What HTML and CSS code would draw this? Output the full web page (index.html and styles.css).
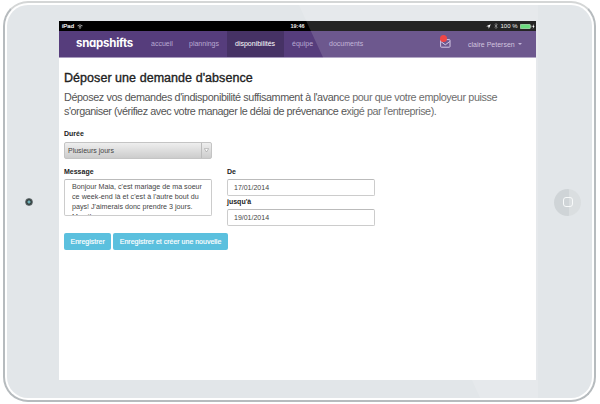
FILE: index.html
```html
<!DOCTYPE html>
<html lang="fr">
<head>
<meta charset="utf-8">
<title>snapshifts</title>
<link rel="stylesheet" href="styles.css">
</head>
<body>
<div class="tablet">
  <div class="bezel">
    <div class="side left"><span class="camera"></span></div>
    <main class="screen">
      <div class="status">
        <span class="device"><b>iPad</b>
          <svg width="6" height="5" viewBox="0 0 6 5"><path d="M.5 1.800Q3 0 5.500 1.800M1.600 3Q3 2 4.400 3" fill="none" stroke="#ccc" stroke-width=".8"/><circle cx="3" cy="4" r=".7" fill="#ccc"/></svg></span>
        <span class="clock">19:46</span>
        <span class="power">
          <svg width="5" height="5" viewBox="0 0 5 5"><path d="M4.800 .2 2.800 4.800 2.400 2.600 .2 2.200z" fill="#fff"/></svg>
          <svg width="4" height="6" viewBox="0 0 4 6"><path d="M.5 1.700 3.300 4.200 2 5.500V.5l1.300 1.300L.5 4.300" fill="none" stroke="#999" stroke-width=".6"/></svg>
          <span class="percent">100 %</span>
          <svg width="15" height="5" viewBox="0 0 15 5"><rect x=".3" y=".3" width="10" height="4.400" rx=".8" fill="#52d769" stroke="#c9e8cd" stroke-width=".6"/><path d="M11 1.600v1.800" stroke="#ccc" stroke-width=".8"/><path d="M13.800 0 12.200 2.800h1L12.700 5l1.900-2.900h-1z" fill="#fff"/></svg>
        </span>
      </div>
      <nav class="navbar">
        <span class="logo">snapshifts</span>
        <a class="n1">accueil</a>
        <a class="n2">plannings</a>
        <a class="n3 active">disponibilités</a>
        <a class="n4">équipe</a>
        <a class="n5">documents</a>
        <span class="mail"><svg width="11" height="9" viewBox="0 0 11 9"><rect x=".6" y=".6" width="9.400" height="7.600" rx=".7" fill="none" stroke="#cdbfe0"/><path d="M.8 2.500 5.300 5.800 9.800 2.500" fill="none" stroke="#cdbfe0"/></svg><i class="dot"></i></span>
        <span class="user">claire Petersen<i class="caret"></i></span>
      </nav>
      <section class="content">
        <h1>Déposer une demande d'absence</h1>
        <p class="lead"><span class="l1">Déposez vos demandes d'indisponibilité suffisamment à l'avance pour que votre employeur puisse</span><br><span class="l2">s'organiser (vérifiez avec votre manager le délai de prévenance exigé par l'entreprise).</span></p>
        <label>Durée</label>
        <div class="select"><span>Plusieurs jours</span><span class="arrow"><svg width="5" height="5" viewBox="0 0 5 5"><path d="M.4 .6H4.600L2.500 4z" fill="#fff" stroke="#999" stroke-width=".6"/></svg></span></div>
        <div class="fields">
          <div>
            <label>Message</label>
            <div class="textarea">Bonjour Maia, c'est mariage de ma soeur<br><span class="wide">ce week-end là et c'est à l'autre bout du</span><br>pays! J'aimerais donc prendre 3 jours.<br>Merci!</div>
          </div>
          <div>
            <label>De</label>
            <div class="input">17/01/2014</div>
            <label class="until">jusqu'à</label>
            <div class="input">19/01/2014</div>
          </div>
        </div>
        <div class="actions"><span class="btn">Enregistrer</span><span class="btn">Enregistrer et créer une nouvelle</span></div>
      </section>
    </main>
    <div class="side right"><span class="home"><i></i></span></div>
  </div>
  <div class="gloss"></div>
</div>
</body>
</html>
```
FILE: styles.css
```css
*{box-sizing:border-box}
body{margin:0;background:#fff;font-family:"Liberation Sans",Arial,sans-serif;font-size:7px;color:#222}
.tablet{position:relative;width:593px;height:401px;margin:1px 0 0 3px;border:2px solid #b6bbbe;border-top-color:#d4d6d6;border-radius:25px;padding:2px;background:#fff;overflow:hidden}
.bezel{height:100%;border-radius:21px;background:#e2e6e9;display:grid;grid-template-columns:52px 477px 1fr;padding-top:16px}
.side{height:362px;display:flex;align-items:center}
.camera{width:8px;height:8px;margin-left:18px;border-radius:50%;background:radial-gradient(#6fb0b8 0 1px,#34403f 2px);border:1px solid #626b6e}
.home{width:27px;height:27px;margin-left:18px;border-radius:50%;background:linear-gradient(90deg,#cfd4d7 54%,#dadee0 54%);display:flex;align-items:center;justify-content:center}
.home i{width:10px;height:10px;border:1px solid #f8fafa;border-radius:3px}
.screen{height:359px;background:#fff;overflow:hidden}
.status{height:10px;background:#000;color:#eee;font-size:6px;display:grid;grid-template-columns:1fr auto 1fr;align-items:center;line-height:10px}
.device{padding-left:3px;display:flex;align-items:center;gap:3px}
.device b{font-weight:400;-webkit-text-stroke:.2px #eee}
.clock{font-weight:700;font-size:5.500px}
.power{display:flex;justify-content:flex-end;align-items:center;gap:2.500px;padding-right:1px}
.navbar{height:27px;border-bottom:1px solid #a79abd;background:#563d7c;color:#b9a9d2;display:flex;line-height:26px;white-space:nowrap}
.logo{color:#fff;font:700 11.500px/24px Inter,sans-serif;font-feature-settings:"cv11";letter-spacing:-.25px;width:83px;padding-left:17px}
.n1{width:37px;padding-left:9px}
.n2{width:48px;padding-left:10px}
.n3{width:57px;padding-left:8px}
.n4{width:37px;padding-left:8px}
.n5{width:60px;padding-left:8px}
.active{background:#463265;color:#fff}
.mail{position:relative;width:67px;padding:8px 0 0 59px;line-height:0}
.dot{position:absolute;left:59px;top:4px;width:7px;height:7px;border-radius:50%;background:#ee2828}
.user{padding-left:20px;line-height:27px;display:flex;align-items:center;gap:3px;color:#c9bcda}
.caret{border:2px solid transparent;border-top-color:#b9a9d2;border-bottom:0}
.content{padding:12px 5px}
h1{font-size:12.500px;letter-spacing:.05px;font-weight:400;line-height:16px;margin:0;-webkit-text-stroke:.35px #222}
.lead{font-size:10.800px;line-height:14.300px;margin:4px 0 10px;color:#555;white-space:nowrap}
.l1{letter-spacing:-.395px}
.l2{letter-spacing:-.46px}
label{display:block;font-size:7px;font-weight:700;line-height:10px;margin:0}
.select{width:148px;height:17px;margin-top:3px;border:1px solid #c4c4c4;border-radius:2px;background:linear-gradient(#eee,#ccc);display:flex;justify-content:space-between;line-height:16px;padding-left:3px;color:#444}
.arrow{width:10px;border-left:1px solid #bbb;display:flex;align-items:center;justify-content:center}
.fields{display:grid;grid-template-columns:148px 148px;column-gap:15px;margin-top:8px}
.textarea,.input{border:1px solid #ccc;border-top-color:#bbb;border-radius:2px;background:#fff;color:#444;margin-top:2px;overflow:hidden;white-space:nowrap}
.textarea{height:37px;padding:2px 7px;font-size:7.150px;line-height:10.300px}
.wide{letter-spacing:.035px}
.input{height:17px;line-height:16px;padding-left:6px}
.until{margin-top:1px}
.actions{display:flex;gap:2px;margin-top:7px}
.btn{height:17px;line-height:17px;padding:0 6.500px;border-radius:2px;background:#5bc0de;color:#fff;white-space:nowrap;-webkit-text-stroke:.15px #fff}
.gloss{position:absolute;inset:-2px;background:rgba(255,255,255,.14);clip-path:polygon(294px 0,535px 0,535px 401px,479px 401px)}
```
